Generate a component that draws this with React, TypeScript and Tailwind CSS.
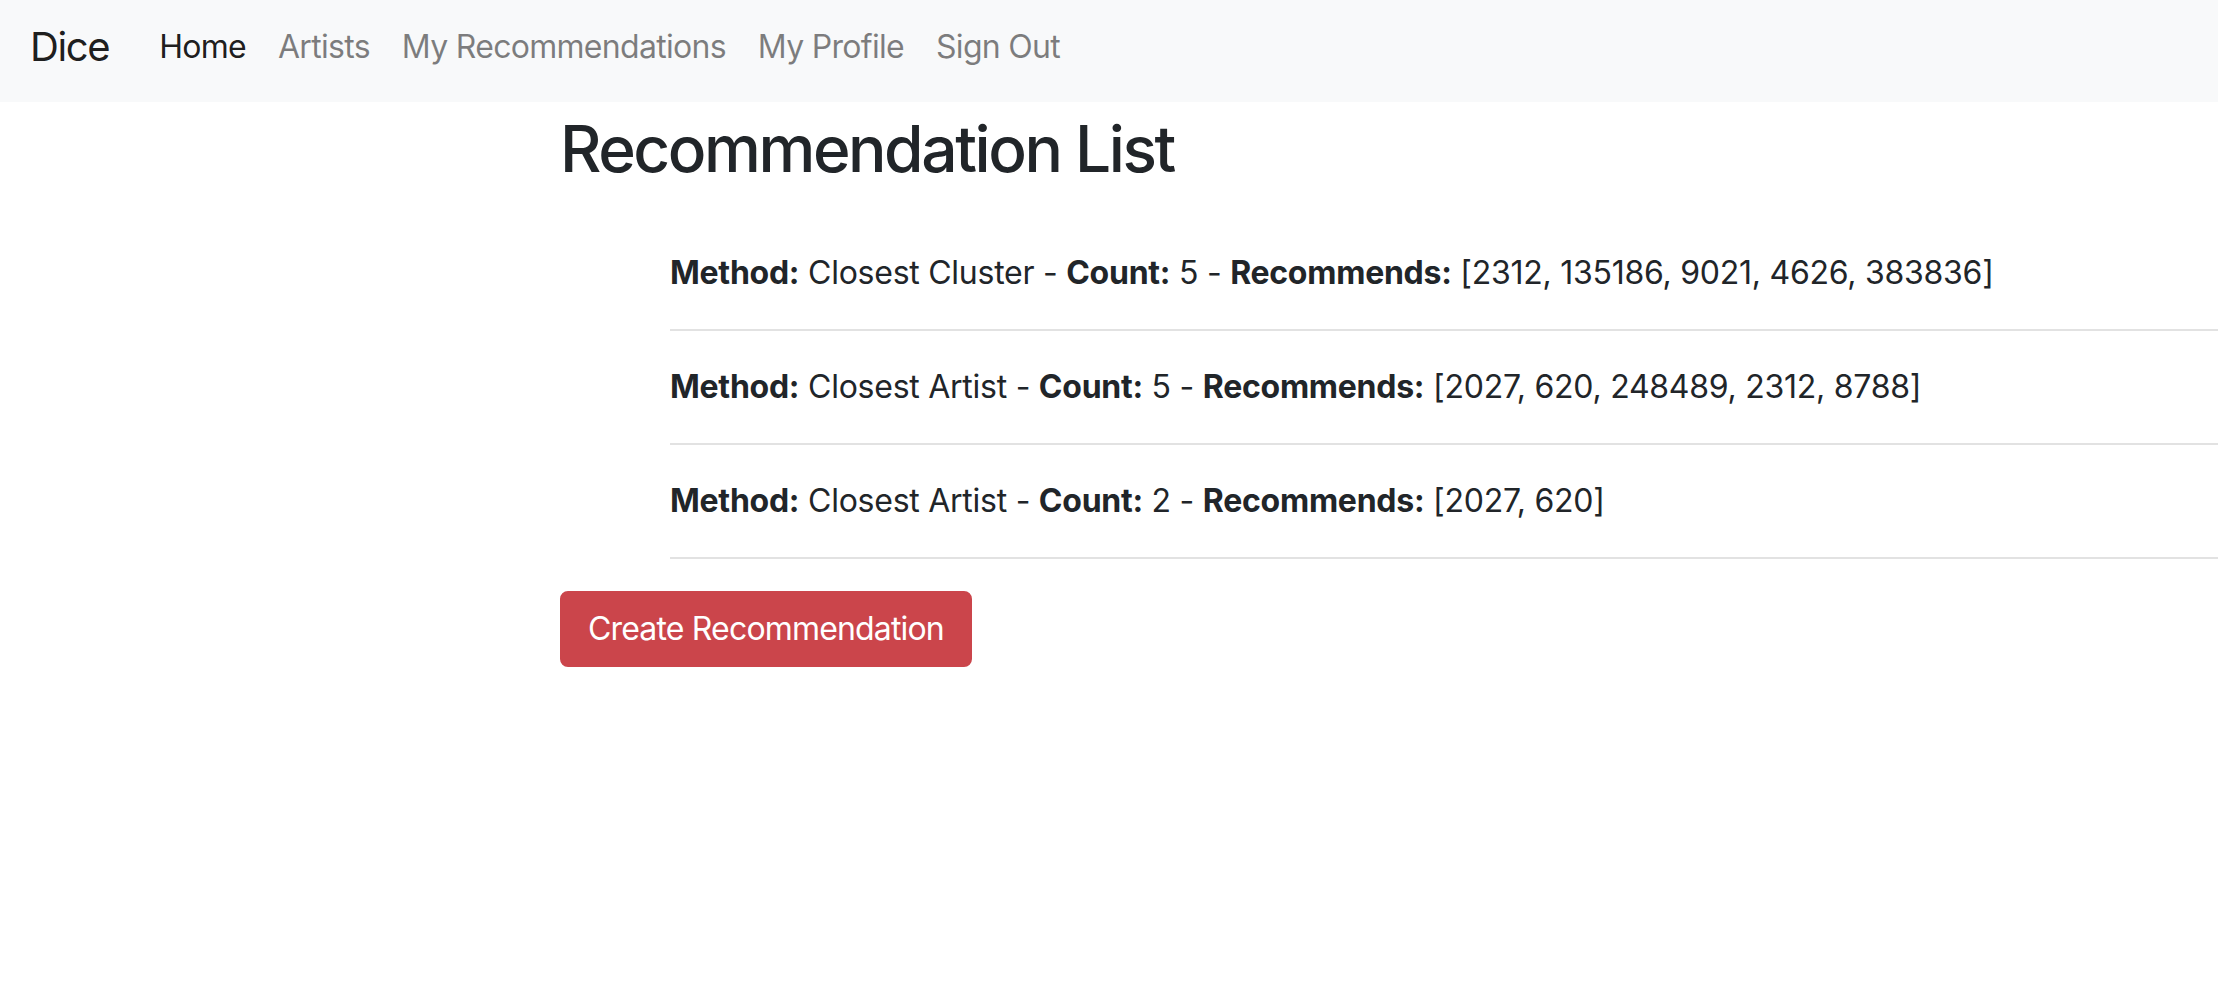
import React from 'react';

const navLinks = [
  { label: 'Home', active: true },
  { label: 'Artists', active: false },
  { label: 'My Recommendations', active: false },
  { label: 'My Profile', active: false },
  { label: 'Sign Out', active: false },
];

const recommendations = [
  { method: 'Closest Cluster', count: 5, ids: [2312, 135186, 9021, 4626, 383836] },
  { method: 'Closest Artist', count: 5, ids: [2027, 620, 248489, 2312, 8788] },
  { method: 'Closest Artist', count: 2, ids: [2027, 620] },
];

const App: React.FC = () => {
  return (
    <div className="min-h-screen bg-white text-[#212529] font-['Inter','Liberation_Sans',sans-serif]">
      {/* top navbar */}
      <nav className="h-[102px] bg-[#f8f9fa] flex items-center pl-[30px] pb-[8px]">
        <a className="text-[40px] leading-[48px] tracking-[-0.035em] text-black/90 mr-[34px] cursor-pointer">Dice</a>
        <ul className="flex items-center">
          {navLinks.map((link) => (
            <li key={link.label}>
              <a
                className={`block px-[16px] text-[32px] leading-[48px] tracking-[-0.022em] cursor-pointer ${
                  link.active ? 'text-black/90' : 'text-black/50 hover:text-black/70'
                }`}
              >
                {link.label}
              </a>
            </li>
          ))}
        </ul>
      </nav>

      <main className="pl-[560px]">
        <h2 className="mt-[8px] text-[64px] leading-[77px] tracking-[-0.038em] font-medium">Recommendation List</h2>

        <ul className="mt-[30px] ml-[110px] tracking-[-0.016em]">
          {recommendations.map((rec, i) => (
            <li key={i} className="py-[32px] text-[32px] leading-[48px] border-b-2 border-[#e2e2e2] whitespace-nowrap">
              <b className="font-bold">Method:</b> {rec.method} - <b className="font-bold">Count:</b> {rec.count} -{' '}
              <b className="font-bold">Recommends:</b> [{rec.ids.join(', ')}]
            </li>
          ))}
        </ul>

        <button className="mt-[32px] px-[26px] py-[12px] border-2 border-[#cb454b] bg-[#cb454b] text-white text-[32px] leading-[48px] tracking-[-0.026em] rounded-[8px]">
          Create Recommendation
        </button>
      </main>
    </div>
  );
};

export default App;
